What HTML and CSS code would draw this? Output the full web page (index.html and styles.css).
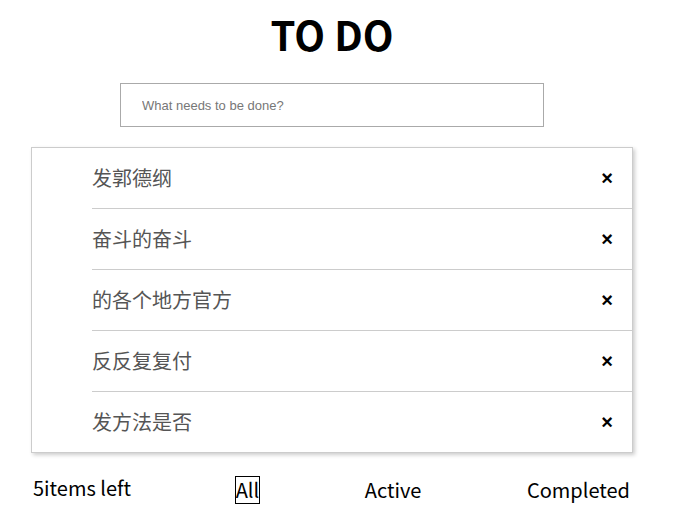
FILE: index.html
```html
<!DOCTYPE html>
<html>
<head>
<meta charset="utf-8">
<link rel="stylesheet" href="styles.css">
</head>
<body>
<div class="app">
  <h1 class="title">TO DO</h1>
  <div class="entry">
    <input class="new-todo" type="text" placeholder="What needs to be done?">
  </div>
  <ul class="list">
    <li class="item"><span class="label">发郭德纲</span><button class="del">×</button></li>
    <li class="item"><span class="label">奋斗的奋斗</span><button class="del">×</button></li>
    <li class="item"><span class="label">的各个地方官方</span><button class="del">×</button></li>
    <li class="item"><span class="label">反反复复付</span><button class="del">×</button></li>
    <li class="item"><span class="label">发方法是否</span><button class="del">×</button></li>
  </ul>
  <div class="footer">
    <span class="count">5items left</span>
    <button class="filter selected">All</button>
    <button class="filter">Active</button>
    <button class="filter">Completed</button>
  </div>
</div>
</body>
</html>
```

FILE: styles.css
```css
* { box-sizing: border-box; }
html, body { margin: 0; padding: 0; background: #fff; }
body { font-family: "Noto Sans CJK SC", "Noto Sans", sans-serif; }
.app { width: 664px; display: flex; flex-direction: column; align-items: center; }
.title {
  margin: 8px 0 0;
  font-size: 40px;
  line-height: 52px;
  font-weight: 700;
  color: #000;
}
.entry { margin-top: 23px; }
.new-todo {
  width: 424px;
  height: 44px;
  border: 1px solid #aaa;
  padding: 0 0 0 21px;
  font-family: "Liberation Sans", Arial, sans-serif;
  font-size: 13px;
  color: #333;
  outline: none;
}
.new-todo::placeholder { color: #777; }
.list {
  list-style: none;
  margin: 20px 0 0;
  padding: 0;
  width: 602px;
  border: 1px solid #ccc;
  box-shadow: 2px 2px 4px rgba(0,0,0,0.2);
}
.item {
  margin-left: 60px;
  height: 61px;
  display: flex;
  align-items: center;
  justify-content: space-between;
  border-bottom: 1px solid #ccc;
}
.item:last-child { border-bottom: none; height: 60px; }
.label { font-size: 20px; color: #555; line-height: 28px; }
.del {
  border: none;
  background: none;
  font-family: "Liberation Sans", Arial, sans-serif;
  font-size: 20px;
  font-weight: 700;
  color: #000;
  padding: 0;
  margin-right: 19px;
  width: 12px;
  cursor: pointer;
}
.footer {
  width: 598px;
  margin-top: 21px;
  display: flex;
  justify-content: space-between;
  align-items: flex-start;
}
.count { font-size: 20px; line-height: 28px; color: #000; }
.filter {
  font-family: "Noto Sans CJK SC", "Noto Sans", sans-serif;
  font-size: 20px;
  line-height: 26px;
  color: #000;
  background: none;
  border: 1px solid transparent;
  padding: 0;
  margin-top: 2px;
}
.filter.selected { border-color: #000; }
```
